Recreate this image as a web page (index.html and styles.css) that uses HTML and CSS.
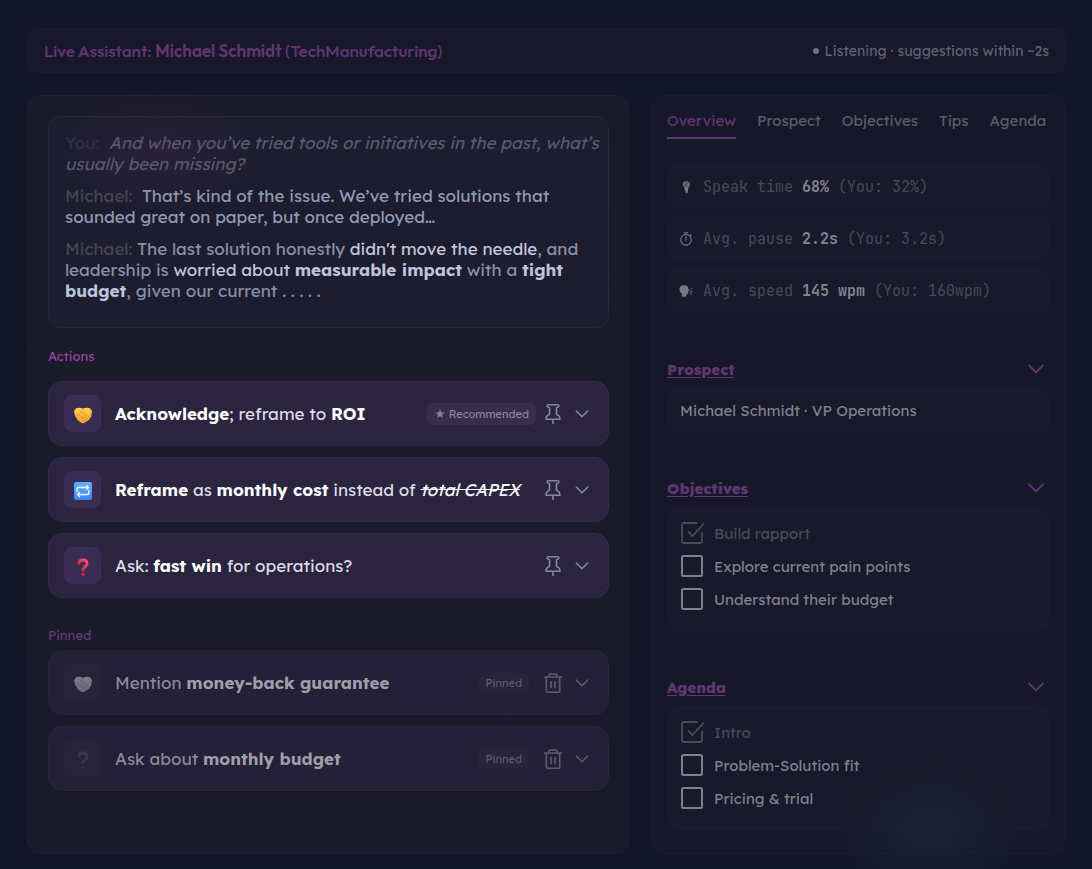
FILE: index.html
```html
<!DOCTYPE html>
<html lang="en">
<head>
<meta charset="utf-8">
<meta name="viewport" content="width=device-width, initial-scale=1">
<title>Live Assistant</title>
<link rel="stylesheet" href="styles.css">
</head>
<body>
<svg class="sprite" aria-hidden="true">
  <defs>
    <linearGradient id="gold" x1="0" y1="0" x2="0" y2="1"><stop offset="0" stop-color="#ffd348"/><stop offset="1" stop-color="#f2a32c"/></linearGradient>
    <linearGradient id="rose" x1="1" y1="0" x2="0" y2="1"><stop offset="0" stop-color="#fb4f87"/><stop offset="1" stop-color="#d8202f"/></linearGradient>
    <linearGradient id="sky" x1="0" y1="0" x2="0" y2="1"><stop offset="0" stop-color="#5fb0ff"/><stop offset="1" stop-color="#3f86ee"/></linearGradient>
  </defs>
  <symbol id="hands" viewBox="0 0 18 18">
    <path fill="url(#gold)" d="M0 5.2 2 2.2Q4.800 1.400 7 2l2 .8L11 2q2.400-.6 5 .2l2 3-.8 5-2 3.200-3 2.400-2.700 1.400-2-.3-3.500-2.500L1 9.800Z"/>
    <path fill="none" stroke="#c98426" stroke-width=".6" stroke-linecap="round" d="M9 3 6 6q1.500 1.600 3.600.5l6 5.500M9.500 9l4.200 4.300M7.500 10.500l4 4.200M2 9.500l2.600-1.200 1.500 1.300 1.200 1.200 1.300 1.400.3 1.800"/>
  </symbol>
  <symbol id="repeat" viewBox="0 0 18 18">
    <rect width="18" height="18" rx="2" fill="url(#sky)"/>
    <path fill="none" stroke="#eef6ff" stroke-width="1.500" stroke-linecap="round" stroke-linejoin="round" d="M3 9.500V7.500q0-2 2-2h9.500M12.500 3.500l2 2-2 2M15 8.500v2q0 2-2 2H3.500M5.500 10.500l-2 2 2 2"/>
  </symbol>
  <symbol id="question" viewBox="0 0 18 18">
    <path fill="none" stroke="url(#rose)" stroke-width="2.800" stroke-linecap="round" d="M4.900 5Q5.200 2 8.800 2q4.200.1 4.200 3.500 0 2-2.200 3.500Q9 10.200 9 12.300"/>
    <circle cx="9" cy="16.300" r="1.600" fill="#e02a3f"/>
  </symbol>
  <symbol id="pin" viewBox="0 0 24 24">
    <path fill="none" stroke="currentColor" stroke-width="1.600" stroke-linecap="round" stroke-linejoin="round" d="M7.200 2.800h9.600q1.200 0 1 1.300-.3 1.400-2.300 1.700v6.400q3.500 1.300 3.500 5H5q0-3.700 3.500-5V5.800Q6.500 5.500 6.200 4.100 6 2.800 7.200 2.800ZM12 17.500V21.500"/>
  </symbol>
  <symbol id="trash" viewBox="0 0 24 24">
    <path fill="none" stroke="currentColor" stroke-width="1.600" stroke-linecap="round" stroke-linejoin="round" d="M3.500 6h17M5.300 6v14q0 1.200 1.200 1.200h11q1.200 0 1.200-1.200V6M8 5.500V4q0-1 1-1h6q1 0 1 1v1.500M10 10.500v6M14 10.500v6"/>
  </symbol>
  <symbol id="chevron" viewBox="0 0 18 18">
    <path fill="none" stroke="currentColor" stroke-width="1.600" stroke-linecap="round" stroke-linejoin="round" d="m3.300 6 5.700 5.800L14.700 6"/>
  </symbol>
  <symbol id="box" viewBox="0 0 24 24">
    <rect x="2" y="2" width="20" height="20" rx="1.500" fill="none" stroke="currentColor" stroke-width="2"/>
  </symbol>
  <symbol id="boxtick" viewBox="0 0 24 24">
    <path fill="none" stroke="currentColor" stroke-width="1.800" stroke-linecap="round" stroke-linejoin="round" d="M17 2H3.500Q2 2 2 3.500v17Q2 22 3.500 22h17q1.500 0 1.500-1.500V11.500M8.500 11l4 4L23.500 3"/>
  </symbol>
  <symbol id="mic" viewBox="0 0 14 14">
    <path fill="currentColor" d="M4 2.500Q7 .2 10.500 2.300q1 2-.8 5.200H5.200q-2-3-1.200-5Z"/>
    <path fill="currentColor" d="M5.200 7.200h4.300L8.600 13q-1 .8-1.900 0Z"/>
    <path stroke="#19192a" stroke-width=".5" d="m5 3 4 3M6.500 1.800l3 2.200M9.500 2.500l-4 3M5 4.800l3 2.400"/>
  </symbol>
  <symbol id="timer" viewBox="0 0 14 14">
    <path fill="none" stroke="currentColor" stroke-width="1.100" stroke-linecap="round" d="M7 2.500a5.300 5.300 0 1 0 .01 0ZM7 2.500V1M5.300.8h3.400M11.300 2.400l1 1M7 4.500v4"/>
  </symbol>
  <symbol id="speak" viewBox="0 0 14 14">
    <path fill="currentColor" d="M.5 5.500Q.5 1.300 5 1.300q4 0 4.400 3.200l.8 2-1 .5.200 2.800L7.500 10l-.2 2.700H3V10Q.5 8.500.5 5.500Z"/>
    <path fill="none" stroke="currentColor" stroke-width=".9" stroke-linecap="round" d="m10.800 6.500 2-2M11 7.800h2.500M10.800 9l2 2"/>
  </symbol>
</svg>

<div class="page">
  <header class="topbar">
    <h1 class="title">Live Assistant: <b>Michael Schmidt</b> (TechManufacturing)</h1>
    <p class="status"><span class="dot"></span>Listening · suggestions within ~2s</p>
  </header>

  <main class="columns">
    <section class="panel panel-main">
      <div class="transcript">
        <p class="line line-you"><span class="who">You:</span>&nbsp; <em>And when you’ve tried tools or initiatives in the past, what’s usually been missing?</em></p>
        <p class="line line-past"><span class="who">Michael:</span>&nbsp; That’s kind of the issue. We’ve tried solutions that sounded great on paper, but once deployed…</p>
        <p class="line"><span class="who">Michael:</span> The last solution honestly <span class="hot">didn't move the needle</span>, and leadership is <span class="hot">worried about</span> <b>measurable impact</b> with a <b>tight budget</b>, given our current . . . . .</p>
      </div>

      <h2 class="label">Actions</h2>
      <div class="cards">
        <article class="card">
          <span class="tile"><svg class="emoji"><use href="#hands"/></svg></span>
          <p class="card-text"><b>Acknowledge</b>; reframe to <b>ROI</b></p>
          <span class="badge badge-star">★ Recommended</span>
          <div class="tools">
            <button class="tool" aria-label="Pin"><svg class="icon"><use href="#pin"/></svg></button>
            <button class="tool" aria-label="Expand"><svg class="chev"><use href="#chevron"/></svg></button>
          </div>
        </article>
        <article class="card">
          <span class="tile"><svg class="emoji"><use href="#repeat"/></svg></span>
          <p class="card-text"><b>Reframe</b> as <b>monthly cost</b> instead of <s>total CAPEX</s></p>
          <div class="tools">
            <button class="tool" aria-label="Pin"><svg class="icon"><use href="#pin"/></svg></button>
            <button class="tool" aria-label="Expand"><svg class="chev"><use href="#chevron"/></svg></button>
          </div>
        </article>
        <article class="card">
          <span class="tile"><svg class="emoji"><use href="#question"/></svg></span>
          <p class="card-text">Ask: <b>fast win</b> for operations?</p>
          <div class="tools">
            <button class="tool" aria-label="Pin"><svg class="icon"><use href="#pin"/></svg></button>
            <button class="tool" aria-label="Expand"><svg class="chev"><use href="#chevron"/></svg></button>
          </div>
        </article>
      </div>

      <h2 class="label label-pinned">Pinned</h2>
      <div class="cards">
        <article class="card card-pinned">
          <span class="tile"><svg class="emoji"><use href="#hands"/></svg></span>
          <p class="card-text">Mention <b>money-back guarantee</b></p>
          <span class="badge">Pinned</span>
          <div class="tools">
            <button class="tool" aria-label="Remove"><svg class="icon"><use href="#trash"/></svg></button>
            <button class="tool" aria-label="Expand"><svg class="chev"><use href="#chevron"/></svg></button>
          </div>
        </article>
        <article class="card card-pinned">
          <span class="tile"><svg class="emoji emoji-dark"><use href="#question"/></svg></span>
          <p class="card-text">Ask about <b>monthly budget</b></p>
          <span class="badge">Pinned</span>
          <div class="tools">
            <button class="tool" aria-label="Remove"><svg class="icon"><use href="#trash"/></svg></button>
            <button class="tool" aria-label="Expand"><svg class="chev"><use href="#chevron"/></svg></button>
          </div>
        </article>
      </div>
    </section>

    <aside class="panel panel-side">
      <nav class="tabs">
        <button class="tab tab-active">Overview</button>
        <button class="tab">Prospect</button>
        <button class="tab">Objectives</button>
        <button class="tab">Tips</button>
        <button class="tab">Agenda</button>
      </nav>

      <div class="stats">
        <p class="stat"><svg class="glyph"><use href="#mic"/></svg><span>Speak time <b>68%</b> (You: 32%)</span></p>
        <p class="stat"><svg class="glyph"><use href="#timer"/></svg><span>Avg. pause <b>2.2s</b> (You: 3.2s)</span></p>
        <p class="stat"><svg class="glyph"><use href="#speak"/></svg><span>Avg. speed <b>145 wpm</b> (You: 160wpm)</span></p>
      </div>

      <section class="group">
        <div class="group-head">
          <a class="group-link" href="#prospect">Prospect</a>
          <button class="tool" aria-label="Toggle prospect"><svg class="chev-lg"><use href="#chevron"/></svg></button>
        </div>
        <p class="group-body group-line" id="prospect">Michael Schmidt · VP Operations</p>
      </section>

      <section class="group">
        <div class="group-head">
          <a class="group-link" href="#objectives">Objectives</a>
          <button class="tool" aria-label="Toggle objectives"><svg class="chev-lg"><use href="#chevron"/></svg></button>
        </div>
        <div class="group-body checks" id="objectives">
          <label class="check check-done"><input type="checkbox" checked><svg class="mark"><use href="#boxtick"/></svg><span>Build rapport</span></label>
          <label class="check"><input type="checkbox"><svg class="mark"><use href="#box"/></svg><span>Explore current pain points</span></label>
          <label class="check"><input type="checkbox"><svg class="mark"><use href="#box"/></svg><span>Understand their budget</span></label>
        </div>
      </section>

      <section class="group">
        <div class="group-head">
          <a class="group-link" href="#agenda">Agenda</a>
          <button class="tool" aria-label="Toggle agenda"><svg class="chev-lg"><use href="#chevron"/></svg></button>
        </div>
        <div class="group-body checks" id="agenda">
          <label class="check check-done"><input type="checkbox" checked><svg class="mark"><use href="#boxtick"/></svg><span>Intro</span></label>
          <label class="check"><input type="checkbox"><svg class="mark"><use href="#box"/></svg><span>Problem-Solution fit</span></label>
          <label class="check"><input type="checkbox"><svg class="mark"><use href="#box"/></svg><span>Pricing &amp; trial</span></label>
        </div>
      </section>
    </aside>
  </main>
</div>
</body>
</html>
```
FILE: styles.css
```css
* { box-sizing: border-box; }

body {
  margin: 0;
  background: #131629;
  color: #9a9ca8;
  font-family: Lexend, Inter, "Open Sans", sans-serif;
  font-size: 15px;
}

h1, h2, p { margin: 0; }

button {
  padding: 0;
  border: 0;
  background: none;
  color: inherit;
  font: inherit;
  cursor: pointer;
}

svg { display: block; flex: none; }

.sprite { position: absolute; width: 0; height: 0; }

.page {
  position: relative;
  min-height: 100vh;
  padding: 28px 26px 15px 27px;
}

/* Soft colour glows laid over the panels */
.page::after {
  content: "";
  position: absolute;
  inset: 0;
  pointer-events: none;
  background:
    radial-gradient(ellipse 105px 65px at 157px 152px, rgba(95, 50, 100, .16), transparent),
    radial-gradient(ellipse 90px 75px at right 162px bottom 36px, rgba(45, 95, 110, .14), transparent);
  background-repeat: no-repeat;
}

.topbar {
  display: flex;
  align-items: center;
  justify-content: space-between;
  height: 45px;
  margin-bottom: 22px;
  padding: 0 16px;
  border: 1px solid #1c1c2e;
  border-radius: 12px;
  background: #18182a;
}

.title {
  color: #613772;
  font-family: Outfit, Inter, sans-serif;
  font-size: 17px;
  font-weight: 500;
}
.title b { font-weight: 600; }

.status {
  display: flex;
  align-items: center;
  gap: 5px;
  color: #5f6272;
  font-size: 14px;
}
.dot { width: 6px; height: 6px; border-radius: 50%; background: #6b6e7d; }

.columns {
  display: grid;
  grid-template-columns: minmax(0, 602fr) minmax(0, 415fr);
  gap: 22px;
}

.panel { border: 1px solid #1f2133; border-radius: 14px; }

.panel-main {
  padding: 20px 19px 20px 20px;
  background: linear-gradient(#1a1a2a, #181b2b);
}

.panel-side {
  padding: 16px 16px 24px 15px;
  border-color: #191b2e;
  background: #16182a;
}

.transcript {
  padding: 15px 8px 15px 16px;
  border: 1px solid #252638;
  border-radius: 12px;
  background: #1d1d2f;
  color: #8b90a9;
  font-size: 17px;
  line-height: 21px;
}
.line { margin-bottom: 11px; }
.who { color: #464755; }
.line-you { color: #585b6c; }
.line-you .who { color: #303041; }
.line-past { color: #9299b3; }
.hot { color: #c3c8df; }
.transcript b { color: #bfc3dc; font-weight: 700; }

.label {
  margin: 18px 0 15px;
  color: #98499e;
  font-size: 13px;
  font-weight: 400;
  line-height: 20px;
}
.label-pinned { margin: 27px 0 5px; color: #663a77; }

.cards { display: grid; gap: 11px; }

.card {
  display: flex;
  align-items: center;
  min-height: 65px;
  padding: 13px 17px 13px 15px;
  border: 1px solid #332c48;
  border-radius: 14px;
  background: linear-gradient(#2c2541, #2a243e);
  color: #dddbe8;
}
.card-text { flex: 1; font-size: 17px; line-height: 24px; }
.card-text b { color: #fff; font-weight: 700; }
.card-text s { color: #f5f4fa; font-style: italic; }

.tile {
  display: grid;
  place-items: center;
  width: 37px;
  height: 37px;
  margin-right: 14px;
  padding-top: 2px;
  border-radius: 8px;
  background: #3a2d54;
}
.emoji { width: 18px; height: 18px; }

.badge {
  margin-right: 12px;
  padding: 0 7px;
  border-radius: 6px;
  background: #28243a;
  color: #5f5c6f;
  font-size: 11px;
  line-height: 20px;
}
.badge-star {
  margin-right: 5px;
  background: #372e4c;
  color: #8a859d;
  line-height: 22px;
}

.tools { display: flex; align-items: center; gap: 8px; color: #8a859d; }
.icon { width: 24px; height: 24px; }
.chev { width: 18px; height: 18px; }

.card-pinned {
  border-color: #282439;
  background: #242037;
  color: #8b8a98;
}
.card-pinned .card-text b { color: #a09ea9; }
.card-pinned .tile { background: #27243a; }
.card-pinned .tools { color: #5f5c6f; }
.card-pinned .emoji { filter: grayscale(1); opacity: .5; }
.card-pinned .emoji-dark { opacity: .3; }

.tabs {
  display: flex;
  align-items: flex-start;
  gap: 21px;
  padding-bottom: 9px;
  border-bottom: 1px solid #1a1b2e;
}
.tab {
  padding-bottom: 7px;
  border-bottom: 2px solid transparent;
  color: #5b5d6c;
  font-size: 15px;
  line-height: 18px;
}
.tab-active { border-color: #613772; color: #613772; }

.stats { display: grid; gap: 8px; margin-top: 15px; }
.stat {
  display: flex;
  align-items: center;
  gap: 10px;
  height: 44px;
  padding: 2px 11px 0;
  border: 1px solid #1b1c2f;
  border-radius: 10px;
  background: #18192a;
  color: #4a4b5a;
  font-family: "JetBrains Mono", "Liberation Mono", monospace;
  font-size: 15px;
}
.stat b { color: #83848f; font-weight: 700; }
.glyph { width: 14px; height: 14px; color: #777884; }

.group { margin-top: 47px; }
.group-head {
  display: flex;
  align-items: center;
  justify-content: space-between;
  height: 20px;
  margin-bottom: 10px;
  padding-right: 2px;
  color: #613772;
}
.group-link {
  color: inherit;
  font-size: 15px;
  font-weight: 800;
  text-underline-offset: 2px;
}
.chev-lg { width: 22px; height: 22px; }

.group-body {
  border: 1px solid #1b1c2f;
  border-radius: 10px;
  background: #18192a;
  color: #80818c;
}
.group-line { padding: 11px 12px 9px; line-height: 20px; }

.checks { display: grid; gap: 11px; padding: 12px 12px 20px; }
.check {
  display: grid;
  grid-template-columns: 24px 1fr;
  align-items: center;
  column-gap: 10px;
  height: 22px;
}
.check input, .mark { grid-area: 1 / 1; width: 24px; height: 24px; margin: 0; }
.check input { appearance: none; }
.mark { pointer-events: none; }
.check-done { color: #4a4b59; }
```
